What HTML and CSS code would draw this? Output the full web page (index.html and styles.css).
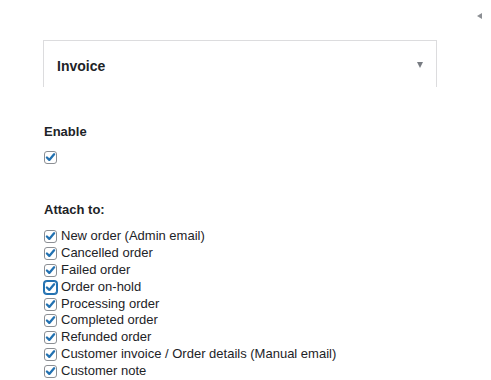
FILE: index.html
```html
<!DOCTYPE html>
<html lang="en">
<head>
  <meta charset="UTF-8">
  <meta name="viewport" content="width=device-width, initial-scale=1.0">
  <title>Invoice settings</title>
  <link rel="stylesheet" href="styles.css">
</head>
<body>
  <div class="topbar">
    <span class="collapse-arrow"></span>
  </div>

  <div class="postbox">
    <h2 class="postbox-title">Invoice</h2>
    <span class="toggle-arrow"></span>
  </div>

  <div class="field field-enable">
    <h3 class="field-label">Enable</h3>
    <label class="check-row">
      <span class="checkbox"><svg viewBox="0 0 11 11"><path d="M1.9 5.5 L4.3 7.9 L9.1 2.3" /></svg></span>
    </label>
  </div>

  <div class="field field-attach">
    <h3 class="field-label">Attach to:</h3>
    <ul class="check-list">
      <li class="check-row"><span class="checkbox"><svg viewBox="0 0 11 11"><path d="M1.9 5.5 L4.3 7.9 L9.1 2.3" /></svg></span>New order (Admin email)</li>
      <li class="check-row"><span class="checkbox"><svg viewBox="0 0 11 11"><path d="M1.9 5.5 L4.3 7.9 L9.1 2.3" /></svg></span>Cancelled order</li>
      <li class="check-row"><span class="checkbox"><svg viewBox="0 0 11 11"><path d="M1.9 5.5 L4.3 7.9 L9.1 2.3" /></svg></span>Failed order</li>
      <li class="check-row"><span class="checkbox focused"><svg viewBox="0 0 11 11"><path d="M1.9 5.5 L4.3 7.9 L9.1 2.3" /></svg></span>Order on-hold</li>
      <li class="check-row"><span class="checkbox"><svg viewBox="0 0 11 11"><path d="M1.9 5.5 L4.3 7.9 L9.1 2.3" /></svg></span>Processing order</li>
      <li class="check-row"><span class="checkbox"><svg viewBox="0 0 11 11"><path d="M1.9 5.5 L4.3 7.9 L9.1 2.3" /></svg></span>Completed order</li>
      <li class="check-row"><span class="checkbox"><svg viewBox="0 0 11 11"><path d="M1.9 5.5 L4.3 7.9 L9.1 2.3" /></svg></span>Refunded order</li>
      <li class="check-row"><span class="checkbox"><svg viewBox="0 0 11 11"><path d="M1.9 5.5 L4.3 7.9 L9.1 2.3" /></svg></span>Customer invoice / Order details (Manual email)</li>
      <li class="check-row"><span class="checkbox"><svg viewBox="0 0 11 11"><path d="M1.9 5.5 L4.3 7.9 L9.1 2.3" /></svg></span>Customer note</li>
    </ul>
  </div>
</body>
</html>
```

FILE: styles.css
```css
* {
  box-sizing: border-box;
}
body {
  margin: 0;
  font-family: 'Liberation Sans', Arial, sans-serif;
  font-size: 13px;
  color: #1d2327;
  background-color: #fff;
  overflow: hidden;
}
.topbar {
  height: 40px;
  display: flex;
  justify-content: flex-end;
  padding-top: 13px;
  padding-right: 9px;
}
.collapse-arrow {
  width: 0;
  height: 0;
  border-top: 3px solid transparent;
  border-bottom: 3px solid transparent;
  border-right: 5px solid #8c8f94;
}
.postbox {
  margin-left: 43px;
  width: 394px;
  height: 47px;
  border: 1px solid #dcdcde;
  border-bottom: none;
  display: flex;
  align-items: flex-start;
  justify-content: space-between;
  padding: 15px 13px 0 13px;
}
.postbox-title {
  margin: 0;
  font-size: 14px;
  font-weight: bold;
  line-height: 20px;
}
.toggle-arrow {
  margin-top: 6px;
  width: 0;
  height: 0;
  border-left: 3px solid transparent;
  border-right: 3px solid transparent;
  border-top: 6px solid #787c82;
}
.field {
  margin-left: 44px;
}
.field-enable {
  margin-top: 36px;
}
.field-attach {
  margin-top: 37px;
}
.field-label {
  margin: 0;
  font-size: 13px;
  font-weight: bold;
  line-height: 18px;
}
.field-enable .field-label {
  margin-bottom: 10px;
}
.field-attach .field-label {
  margin-bottom: 9px;
}
.check-list {
  list-style: none;
  margin: 0;
  padding: 0;
}
.check-row {
  display: flex;
  align-items: center;
  gap: 4px;
  height: 16.9px;
  line-height: 16.9px;
}
.field-enable .check-row {
  height: 13px;
}
.checkbox {
  flex: none;
  width: 13px;
  height: 13px;
  border: 1px solid #8c8f94;
  border-radius: 3px;
  background-color: #fff;
  display: flex;
}
.checkbox svg {
  width: 11px;
  height: 11px;
  fill: none;
  stroke: #2271b1;
  stroke-width: 2.3;
  stroke-linecap: round;
  stroke-linejoin: round;
}
.checkbox.focused {
  border-color: #2271b1;
  box-shadow: 0 0 0 1px #2271b1;
}
```
